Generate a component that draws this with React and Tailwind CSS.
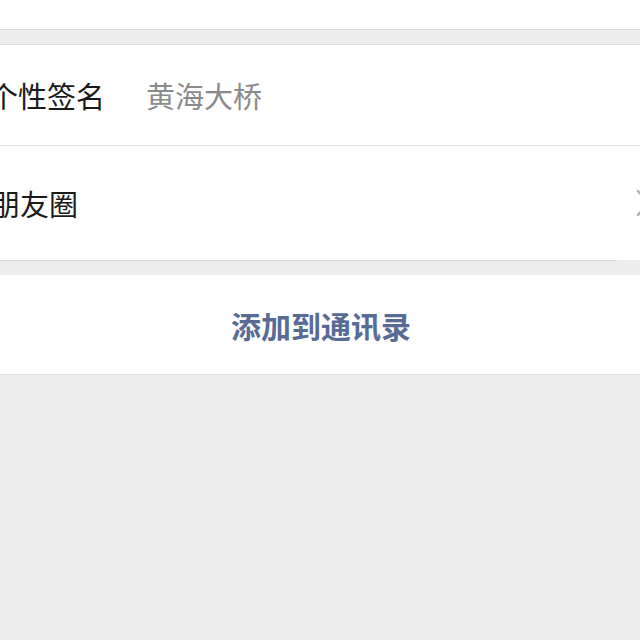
import React from 'react';

const Chevron = () => (
  <svg width="14" height="28" viewBox="0 0 14 28" className="shrink-0">
    <path d="M2 2 L12 14 L2 26" fill="none" stroke="#b2b2b2" strokeWidth="2.4" strokeLinecap="round" strokeLinejoin="round" />
  </svg>
);

export default function App() {
  return (
    <div
      className="w-[640px] h-[640px] overflow-hidden bg-[#ededed]"
      style={{ fontFamily: '"Noto Sans CJK SC", "Noto Sans", sans-serif' }}
    >
      {/* previous section, scrolled mostly off */}
      <div className="h-[30px] bg-white border-b border-[#dcdcdc]" />

      <div className="mt-[14px] bg-white border-t border-[#dcdcdc]">
        {/* signature row */}
        <div className="h-[101px] flex items-center border-b border-[#e6e6e6]">
          <span className="ml-[-11px] w-[157px] text-[29px] leading-none text-[#1a1a1a]">个性签名</span>
          <span className="text-[29px] leading-none text-[#8a8a8a]">黄海大桥</span>
        </div>

        {/* moments row */}
        <div className="h-[114px] flex items-center justify-between">
          <span className="ml-[-9px] text-[29px] leading-none text-[#1a1a1a]">朋友圈</span>
          <div className="mr-[-10px]">
            <Chevron />
          </div>
        </div>
      </div>
      <div className="h-px w-[617px] bg-[#d6d6d6]" />

      {/* add contact button */}
      <div className="mt-[14px] h-[100px] bg-white border-b border-[#e0e0e0] flex items-center justify-center">
        <span className="text-[30px] leading-none font-bold text-[#576b95] ml-[2px]">添加到通讯录</span>
      </div>
    </div>
  );
}
